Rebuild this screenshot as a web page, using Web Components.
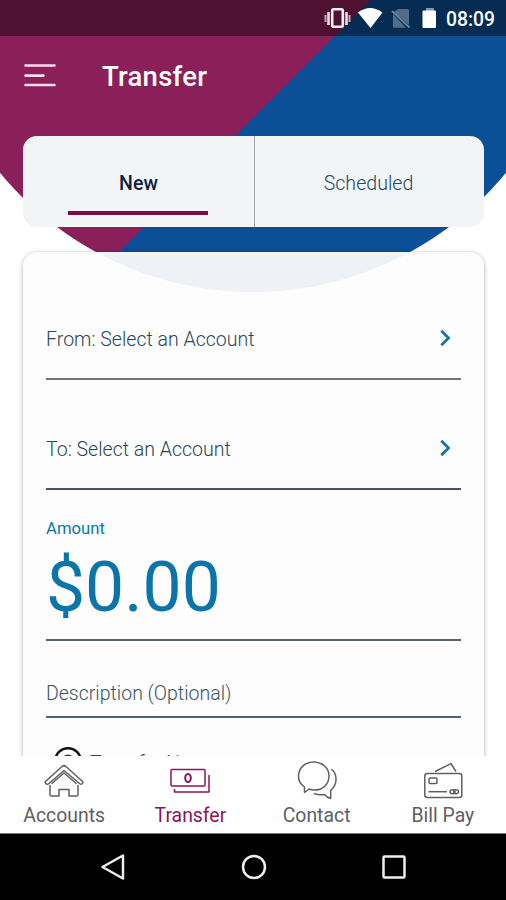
<!DOCTYPE html>
<html lang="en">
<head>
<meta charset="utf-8">
<title>Transfer</title>
<style>
html,body{margin:0;background:#fff;font-family:Roboto,sans-serif}
</style>
</head>
<body>
<transfer-app></transfer-app>
<script>
const define=(name,html)=>customElements.define(name,class extends HTMLElement{
  constructor(){
    super();
    this.attachShadow({mode:'open'}).innerHTML=html;
  }
});

define('status-bar',`<style>
:host{display:flex;height:36px;box-sizing:border-box;background:rgba(0,0,0,.44);align-items:center;justify-content:flex-end;color:#fff;padding-right:11px}
svg{display:block;flex:none}
span{font:500 19.300px/36px Roboto,sans-serif;width:50px;text-align:right;white-space:nowrap;margin-left:8px;padding-top:3px}
</style>
<svg width="114" height="36" viewBox="323 0 114 36">
<rect x="332.2" y="9.2" width="10.6" height="17.600" rx="1.5" fill="none" stroke="#f8eff5" stroke-width="2.6"/>
<path d="M328.500 12v13M346.500 12v13" stroke="#e9dce5" stroke-width="2.600"/><path d="M325.500 15v7M349.500 15v7" stroke="#c4a3b6" stroke-width="2"/>
<path d="M358 12.500Q370 3.500 382.500 12.500L370.500 28Z" fill="#fff"/>
<path d="M398 9h9.500q1.500 0 1.500 1.500V25L394 12Z M393 14v12.500q0 1.200 1.200 1.200H406Z" fill="#526d8c"/>
<path d="M392 11l17.500 16.500" stroke="#6d839c" stroke-width="1.800"/>
<rect x="426" y="8" width="8" height="4" fill="#8298b1"/><rect x="422.500" y="10.500" width="13.500" height="17.500" rx="1.200" fill="#fff"/>
</svg><span>08:09</span>`);

define('title-bar',`<style>
:host{display:flex;align-items:center;height:80px;padding-left:24px;color:#fff}
h1{margin:2px 0 0 46px;font:500 27.500px/32px Roboto,sans-serif;letter-spacing:.25px}
svg{display:block}
</style>
<svg width="32" height="24" viewBox="0 0 32 24" stroke="#fbdcef" stroke-width="2.600" stroke-linecap="round"><path d="M1.500 1.500h29M1.500 11.600h18M1.500 21h29"/></svg>
<h1><slot></slot></h1>`);

define('tab-switch',`<style>
:host{display:grid;grid-template-columns:232px 1fr;height:91px;margin:20px 22px 0 23px;background:#f2f4f6;border-radius:14px;overflow:hidden}
div{display:flex;flex-direction:column;align-items:center;line-height:24px;padding-top:36px}
.a{border-right:1px solid #a4a8ac;font-weight:500;font-size:19.500px;color:#10203c}
.a i{width:140px;height:4px;background:#7c0c44;margin:15px 2px 0 0}
.b{font-weight:300;font-size:19.600px;color:#244a60;padding-right:2px}
</style>
<div class="a"><slot name="active"></slot><i></i></div><div class="b"><slot name="other"></slot></div>`);

define('account-row',`<style>
:host{display:flex;align-items:flex-start;justify-content:space-between;height:53px;box-sizing:border-box;border-bottom:2px solid var(--line,#6d747e);font:300 19.550px/24px Roboto,sans-serif;color:#294658}
span{padding-top:1px}
svg{display:block;margin:2px 10px 0 0}
</style><span><slot></slot></span>
<svg width="12" height="18" viewBox="0 0 12 18"><path d="M2.300 1.800L9.500 9L2.300 16.200" fill="none" stroke="#1772a5" stroke-width="2.800"/></svg>`);

define('amount-field',`<style>
:host{display:block;height:120px;padding-top:1px;border-bottom:2px solid #52616b;color:#0b75a9}
label{display:block;font:400 16.700px/20px Roboto,sans-serif}
strong{display:block;font:400 69.600px/78px Roboto,sans-serif;margin-top:9px}
</style><label><slot name="label"></slot></label><strong><slot></slot></strong>`);

define('text-field',`<style>
:host{display:block;height:34px;padding-top:1px;border-bottom:2px solid #52617b;font:300 19.500px/24px Roboto,sans-serif;color:#3a5366}
</style><slot></slot>`);

define('schedule-option',`<style>
:host{display:flex;align-items:flex-start;font:300 19.550px/24px Roboto,sans-serif;color:#294658;padding-left:8px}
svg{display:block;margin-right:8px}
span{padding-top:5px}
</style><svg width="28" height="28" viewBox="0 0 28 28" fill="none" stroke="#111"><circle cx="14" cy="14" r="12.800" stroke-width="2.500"/><circle cx="14" cy="14.500" r="7" fill="#333" stroke="none"/></svg><span><slot></slot></span>`);

define('form-card',`<style>
:host{display:block;box-sizing:border-box;margin:25px 22px 0 23px;height:530px;border-radius:14px;background:rgba(253,253,253,.94);border-top:2px solid #f8f8f8;box-shadow:0 1px 4px rgba(0,0,0,.34);padding:73px 23px 0}
</style><slot></slot>`);

define('nav-item',`<style>
:host{display:flex;flex:1;flex-direction:column;align-items:center;color:#606060;font:400 19.400px/24px Roboto,sans-serif}
:host([active]){color:#8c1457}
.i{height:48px;display:block}
</style><span class="i"><slot name="icon"></slot></span><span><slot></slot></span>`);

define('tab-bar',`<style>
:host{display:flex;height:78px;background:#fff;box-sizing:border-box;border-bottom:1px solid #777;padding-left:1px}
svg{display:block;fill:none;stroke:currentColor;stroke-width:1.500;stroke-linejoin:round}
</style>
<nav-item><svg slot="icon" width="48" height="47" viewBox="39.500 756 48 47"><path d="M45 781.500L61.500 766.500Q63.500 764.800 65.500 766.500L82 781.500Q83 783 81.500 784Q80.500 784.800 79 783.500L63.500 770.500L48.500 783.500Q47 784.800 45.800 783.800Q44 782.700 45 781.500Z"/><path d="M49.500 785V794.500Q49.500 796 51 796H58.500V789.500H68.500V796H76Q77.500 796 77.500 794.500V785M51 783.800L63.500 773L76 783.800"/></svg>Accounts</nav-item>
<nav-item active><svg slot="icon" width="48" height="47" viewBox="166.500 756 48 47"><rect x="171.500" y="769.500" width="34" height="16.500" rx="1"/><path d="M209.500 775V792H175V789"/><ellipse cx="188.500" cy="778" rx="2.800" ry="4" stroke-width="2"/></svg>Transfer</nav-item>
<nav-item><svg slot="icon" width="48" height="47" viewBox="292.500 756 48 47"><path d="M304 792.300V787Q298 783 298 776.500C298 767.500 305 762 313 762C322 762 328.500 768 328.500 776C328.500 785.500 321 790 314 790Q311 790 308.500 789Q306.500 790.800 304 792.300Z"/><path d="M331 769Q335.700 773 335.500 780Q335.200 786 330.200 790.500V798.500Q326.500 797.500 324 794.500Q318.500 795.500 313.500 793.500"/></svg>Contact</nav-item>
<nav-item><svg slot="icon" width="48" height="47" viewBox="419 756 48 47"><rect x="424.800" y="773.500" width="37" height="24" rx="2.500"/><path d="M435 771.500L451 763.700L456 771.500"/><rect x="429" y="778" width="8" height="5.500" rx="1"/><path d="M428.500 791.700H447"/><ellipse cx="452.500" cy="791.700" rx="2.500" ry="2"/><ellipse cx="456" cy="791.700" rx="2.500" ry="2"/></svg>Bill Pay</nav-item>`);

define('system-nav',`<style>
:host{display:flex;gap:112.500px;box-sizing:border-box;padding:19px 0 0 99px;height:66px;background:#000}
svg{display:block;flex:none;fill:none;stroke:#eee;stroke-width:2.500;stroke-linejoin:round}
</style>
<svg width="28" height="28" viewBox="0 0 28 28"><path d="M24 2.500V25.500L3.500 14Z"/></svg>
<svg width="28" height="28" viewBox="0 0 28 28"><circle cx="14" cy="14" r="11"/></svg>
<svg width="28" height="28" viewBox="0 0 28 28"><rect x="3.500" y="3.500" width="21" height="21" rx="1"/></svg>`);

define('transfer-app',`<style>
:host{display:flex;flex-direction:column;width:506px;height:900px;overflow:hidden;background:#fff}
main{height:756px;overflow:hidden;flex:none;background:
 radial-gradient(circle at 253px -36px,transparent 327.500px,#fff 328.500px),
 linear-gradient(135deg,#8b1f5a 0 261.800px,#0b4f96 262.800px);background-size:506px 756px,506px 506px;background-repeat:no-repeat}
.to{margin:57px 0 28px;--line:#4c5265}
text-field{margin-top:40px}
schedule-option{margin-top:29px}
</style>
<main>
<status-bar></status-bar>
<title-bar>Transfer</title-bar>
<tab-switch><span slot="active">New</span><span slot="other">Scheduled</span></tab-switch>
<form-card>
<account-row>From: Select an Account</account-row>
<account-row class="to">To: Select an Account</account-row>
<amount-field><span slot="label">Amount</span>$0.00</amount-field>
<text-field>Description (Optional)</text-field>
<schedule-option>Transfer Now</schedule-option>
</form-card>
</main>
<tab-bar></tab-bar>
<system-nav></system-nav>`);
</script>
</body>
</html>
